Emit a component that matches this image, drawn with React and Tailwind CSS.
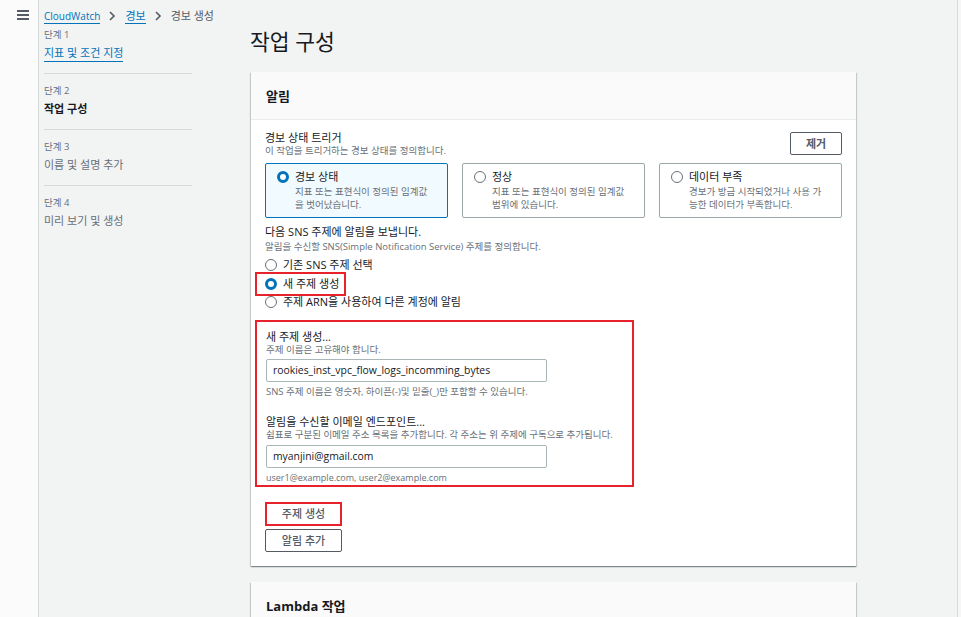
import React from "react";

function Radio({ checked }) {
  return checked ? (
    <span className="inline-block w-[12px] h-[12px] rounded-full border-[3.5px] border-[#0073bb] bg-white shrink-0" />
  ) : (
    <span className="inline-block w-[12px] h-[12px] rounded-full border-[1.5px] border-[#687078] bg-white shrink-0" />
  );
}

function Tile({ checked, title, desc }) {
  return (
    <div
      className={
        "h-[55px] rounded-[2px] border pl-[11px] pt-[6px] " +
        (checked ? "border-[#0073bb] bg-[#f1faff]" : "border-[#9ba7a8] bg-white")
      }
    >
      <div className="flex items-center gap-[6px] h-[14px]">
        <Radio checked={checked} />
        <span className="text-[11px] leading-[14px] text-[#16191f]">{title}</span>
      </div>
      <div className="ml-[18px] mt-[1px] w-[135px] text-[9.5px] leading-[13px] text-[#687078]">{desc}</div>
    </div>
  );
}

function NavItem({ step, title, kind, last }) {
  return (
    <div className={"pt-[10px] pb-[12px] " + (last ? "" : "border-b border-[#d5dbdb]")}>
      <div className="h-[14px] leading-[14px] text-[9.5px] text-[#687078]">{step}</div>
      <div className="mt-[3px] h-[16px] leading-[16px] text-[11px]">
        {kind === "link" && (
          <span className="text-[#0073bb] border-b border-[#0073bb] pb-[1px]">{title}</span>
        )}
        {kind === "active" && <span className="text-[#16191f] font-bold">{title}</span>}
        {kind === "muted" && <span className="text-[#687078]">{title}</span>}
      </div>
    </div>
  );
}

function Chevron() {
  return (
    <svg width="8" height="10" viewBox="0 0 8 10" className="ml-[8px] mr-[9px]">
      <path d="M2 1 L6 5 L2 9" fill="none" stroke="#545b64" strokeWidth="1.6" />
    </svg>
  );
}

export default function App() {
  return (
    <div className="flex h-[617px] w-full overflow-hidden bg-[#f2f3f3] font-['Open_Sans','Noto_Sans_CJK_KR',sans-serif] text-[#16191f]">
      {/* left strip */}
      <div className="w-[39px] shrink-0 bg-[#fbfbfb] border-r border-[#d5dbdb] pt-[10px] pl-[17px]">
        <div className="flex flex-col gap-[2.5px] w-[12px]">
          <span className="block h-[1.5px] bg-[#545b64]" />
          <span className="block h-[1.5px] bg-[#545b64]" />
          <span className="block h-[1.5px] bg-[#545b64]" />
        </div>
      </div>

      {/* content */}
      <div className="flex-1 pl-[5px]">
        {/* breadcrumb */}
        <div className="flex items-center h-[28px] pt-[4px] text-[11px] leading-[14px]">
          <span className="text-[10px] text-[#0073bb] border-b border-[#0073bb]">CloudWatch</span>
          <Chevron />
          <span className="text-[#0073bb] border-b border-[#0073bb]">경보</span>
          <Chevron />
          <span className="text-[#545b64]">경보 생성</span>
        </div>

        <div className="flex">
          {/* nav */}
          <div className="w-[148px] shrink-0 -mt-[10px]">
            <NavItem step="단계 1" title="지표 및 조건 지정" kind="link" />
            <NavItem step="단계 2" title="작업 구성" kind="active" />
            <NavItem step="단계 3" title="이름 및 설명 추가" kind="muted" />
            <NavItem step="단계 4" title="미리 보기 및 생성" kind="muted" last />
          </div>

          {/* main */}
          <div className="ml-[58px] w-[606px] shrink-0">
            <div className="h-[28px] leading-[28px] text-[21.5px] text-[#16191f]">작업 구성</div>

            {/* panel */}
            <div className="mt-[16px] ml-[1px] bg-white shadow-[0_1px_1px_0_rgba(0,28,36,0.3),1px_1px_1px_0_rgba(0,28,36,0.15),-1px_1px_1px_0_rgba(0,28,36,0.15)]">
              <div className="h-[48px] bg-[#fafafa] border-b border-[#eaeded] pl-[15px] flex items-center">
                <span className="text-[13px] font-bold leading-[16px]">알림</span>
              </div>

              <div className="pl-[14px] pr-[14px] pt-[11px] pb-[14px]">
                {/* trigger */}
                <div className="flex justify-between">
                  <div>
                    <div className="h-[14px] leading-[14px] text-[11px]">경보 상태 트리거</div>
                    <div className="h-[12px] leading-[12px] text-[9.5px] text-[#687078]">
                      이 작업을 트리거하는 경보 상태를 정의합니다.
                    </div>
                  </div>
                  <button className="mt-[1px] w-[52px] h-[23px] border border-[#545b64] rounded-[2px] bg-white text-[11px] font-bold text-[#545b64] leading-[14px]">
                    제거
                  </button>
                </div>

                <div className="mt-[6px] grid grid-cols-3 gap-[14px]">
                  <Tile checked title="경보 상태" desc="지표 또는 표현식이 정의된 임계값을 벗어났습니다." />
                  <Tile title="정상" desc="지표 또는 표현식이 정의된 임계값 범위에 있습니다." />
                  <Tile title="데이터 부족" desc="경보가 방금 시작되었거나 사용 가능한 데이터가 부족합니다." />
                </div>

                {/* SNS */}
                <div className="mt-[7px] h-[14px] leading-[14px] text-[11px]">다음 SNS 주제에 알림을 보냅니다.</div>
                <div className="mt-[2px] h-[12px] leading-[12px] text-[9.5px] text-[#687078]">
                  알림을 수신할 SNS(Simple Notification Service) 주제를 정의합니다.
                </div>

                <div className="mt-[3px] flex items-center gap-[6px] h-[17px]">
                  <Radio />
                  <span className="text-[11px] leading-[14px]">기존 SNS 주제 선택</span>
                </div>
                <div className="-mt-[1px] -ml-[10px] w-[91px] h-[24px] border-2 border-[#e8222a] pl-[8px] flex items-center gap-[6px]">
                  <Radio checked />
                  <span className="text-[11px] leading-[14px]">새 주제 생성</span>
                </div>
                <div className="-mt-[3px] flex items-center gap-[6px] h-[18px]">
                  <Radio />
                  <span className="text-[11px] leading-[14px]">주제 ARN을 사용하여 다른 계정에 알림</span>
                </div>

                {/* new topic box */}
                <div className="mt-[9px] -ml-[10px] w-[379px] border-2 border-[#e8222a] pl-[9px] pt-[8px] pb-[1px]">
                  <div className="h-[14px] leading-[14px] text-[11px]">새 주제 생성...</div>
                  <div className="h-[12px] leading-[12px] text-[9.5px] text-[#687078]">주제 이름은 고유해야 합니다.</div>
                  <div className="mt-[3px] w-[281px] h-[23px] border border-[#aab7b8] rounded-[2px] bg-white pl-[6px] flex items-center text-[10.4px]">
                    rookies_inst_vpc_flow_logs_incomming_bytes
                  </div>
                  <div className="mt-[4px] h-[12px] leading-[12px] text-[9.5px] text-[#687078]">
                    SNS 주제 이름은 영숫자, 하이픈(-)및 밑줄(_)만 포함할 수 있습니다.
                  </div>

                  <div className="mt-[17px] h-[14px] leading-[14px] text-[11px]">알림을 수신할 이메일 엔드포인트...</div>
                  <div className="h-[12px] leading-[12px] text-[9.5px] text-[#687078]">
                    쉼표로 구분된 이메일 주소 목록을 추가합니다. 각 주소는 위 주제에 구독으로 추가됩니다.
                  </div>
                  <div className="mt-[4px] w-[281px] h-[23px] border border-[#aab7b8] rounded-[2px] bg-white pl-[6px] flex items-center text-[10.4px]">
                    myanjini@gmail.com
                  </div>
                  <div className="mt-[4px] h-[12px] leading-[12px] text-[9px] text-[#687078]">
                    user1@example.com, user2@example.com
                  </div>
                </div>

                <button className="mt-[15px] block w-[77px] h-[24px] border-2 border-[#e8222a] bg-white text-[11px] font-medium text-[#545b64] leading-[14px]">
                  주제 생성
                </button>
                <button className="mt-[3px] block w-[77px] h-[23px] border border-[#545b64] rounded-[2px] bg-white text-[11px] font-medium text-[#545b64] leading-[14px]">
                  알림 추가
                </button>
              </div>
            </div>

            {/* lambda panel */}
            <div className="mt-[16px] ml-[1px] bg-white shadow-[0_1px_1px_0_rgba(0,28,36,0.3),1px_1px_1px_0_rgba(0,28,36,0.15),-1px_1px_1px_0_rgba(0,28,36,0.15)]">
              <div className="h-[48px] bg-[#fafafa] border-b border-[#eaeded] pl-[15px] flex items-center">
                <span className="text-[13px] font-bold leading-[16px]">Lambda 작업</span>
              </div>
            </div>
          </div>
        </div>
      </div>

      {/* scrollbar edge */}
      <div className="w-[4px] shrink-0 border-l border-[#d5dbdb] bg-[#f6f6f6]" />
    </div>
  );
}
